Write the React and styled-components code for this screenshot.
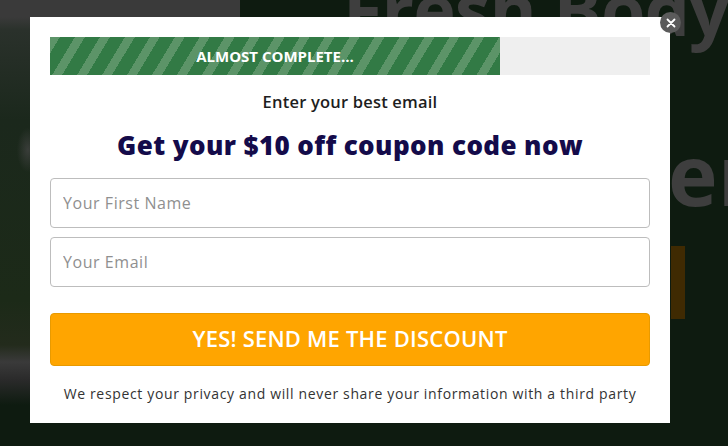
import React from "react";
import styled, { createGlobalStyle } from "styled-components";

const Global = createGlobalStyle`
  html, body { margin: 0; padding: 0; }
  body { font-family: "Open Sans", "Liberation Sans", sans-serif; background: #0e1b10; }
  * { box-sizing: border-box; }
`;

const Page = styled.div`
  position: relative;
  width: 728px;
  height: 446px;
  overflow: hidden;
  background: #0e1b10;
  display: grid;
  grid-template-columns: 240px 1fr;
`;

const ProductColumn = styled.div`
  background:
    radial-gradient(ellipse 14px 28px at 28px 150px, rgba(70,70,70,0.7), transparent 80%),
    linear-gradient(180deg, #3a3a3a 0, #3a3a3a 17px, #2a312b 30px, #1b281c 120px, #1c2a18 300px, #232b1c 345px, #3a3a3a 362px, #2a2a2a 380px, #0e1b10 405px);
`;

const HeroText = styled.div`
  display: flex;
  flex-direction: column;
  padding-left: 103px;
  color: #3e3e3e;
  font-family: "Open Sans", sans-serif;
  font-weight: 700;
`;

const HeroTitle = styled.div`
  font-size: 72px;
  line-height: 1;
  margin-top: -28px;
  white-space: nowrap;
  letter-spacing: -1px;
`;

const HeroLine = styled.div`
  font-size: 84px;
  line-height: 1;
  margin-top: 88px;
  padding-left: 325px;
  white-space: nowrap;
`;

const HeroButton = styled.div`
  margin-top: 30px;
  margin-left: 328px;
  width: 14px;
  height: 73px;
  background: #3f2a02;
`;

const Modal = styled.div`
  position: absolute;
  top: 17px;
  left: 30px;
  width: 640px;
  height: 406px;
  background: #ffffff;
  padding: 20px 20px 0;
  display: flex;
  flex-direction: column;
  align-items: stretch;
`;

const Close = styled.button`
  position: absolute;
  top: -5px;
  right: -11px;
  width: 21px;
  height: 21px;
  border-radius: 50%;
  border: none;
  background: #5b5b5b;
  padding: 0;
  display: flex;
  align-items: center;
  justify-content: center;
`;

const Progress = styled.div`
  height: 38px;
  background: #efefef;
  display: flex;
`;

const Fill = styled.div`
  height: 100%;
  background: repeating-linear-gradient(
    121deg,
    #5c9468 0,
    #5c9468 8.5px,
    #327a45 8.5px,
    #327a45 21.4px
  );
  display: flex;
  align-items: center;
  justify-content: center;
  color: #ffffff;
  font-weight: 700;
  font-size: 15px;
  letter-spacing: 0px;
`;

const Subtitle = styled.div`
  margin-top: 17px;
  text-align: center;
  font-size: 16.5px;
  font-weight: 600;
  color: #1e1e1e;
  line-height: 20px;
  letter-spacing: 0.2px;
`;

const Title = styled.h1`
  margin: 17px 0 0;
  text-align: center;
  font-size: 26px;
  font-weight: 800;
  color: #140b4a;
  line-height: 32px;
  letter-spacing: 0.4px;
`;

const Fields = styled.div`
  margin-top: 17px;
  display: flex;
  flex-direction: column;
  gap: 9px;
`;

const Input = styled.input`
  height: 50px;
  border: 1px solid #bdbdbd;
  border-radius: 4px;
  padding: 0 12px;
  font-family: "Open Sans", sans-serif;
  font-size: 16px;
  letter-spacing: 0.55px;
  color: #333;
  outline: none;
  &::placeholder { color: #8f8f8f; }
`;

const Submit = styled.button`
  margin-top: 26px;
  height: 53px;
  padding: 0 0 3px;
  border: 1px solid #e89a00;
  border-radius: 4px;
  background: #ffa500;
  color: #ffffff;
  font-family: "Open Sans", sans-serif;
  font-size: 22px;
  font-weight: 600;
  letter-spacing: 0.2px;
`;

const Privacy = styled.p`
  margin: 18px 0 0;
  text-align: center;
  font-size: 14px;
  color: #333333;
  letter-spacing: 0.65px;
`;

export default function App() {
  const pct = 75;
  return (
    <>
      <Global />
      <Page>
        <ProductColumn />
        <HeroText>
          <HeroTitle>Fresh Body</HeroTitle>
          <HeroLine>em</HeroLine>
          <HeroButton />
        </HeroText>
        <Modal>
          <Close aria-label="close">
            <svg width="10" height="10" viewBox="0 0 10 10">
              <path d="M1.5 1.5 L8.5 8.5 M8.5 1.5 L1.5 8.5" stroke="#fff" strokeWidth="1.8" strokeLinecap="round" />
            </svg>
          </Close>
          <Progress>
            <Fill style={{ width: `${pct}%` }}>ALMOST COMPLETE...</Fill>
          </Progress>
          <Subtitle>Enter your best email</Subtitle>
          <Title>Get your $10 off coupon code now</Title>
          <Fields>
            <Input placeholder="Your First Name" />
            <Input placeholder="Your Email" />
          </Fields>
          <Submit>YES! SEND ME THE DISCOUNT</Submit>
          <Privacy>We respect your privacy and will never share your information with a third party</Privacy>
        </Modal>
      </Page>
    </>
  );
}
